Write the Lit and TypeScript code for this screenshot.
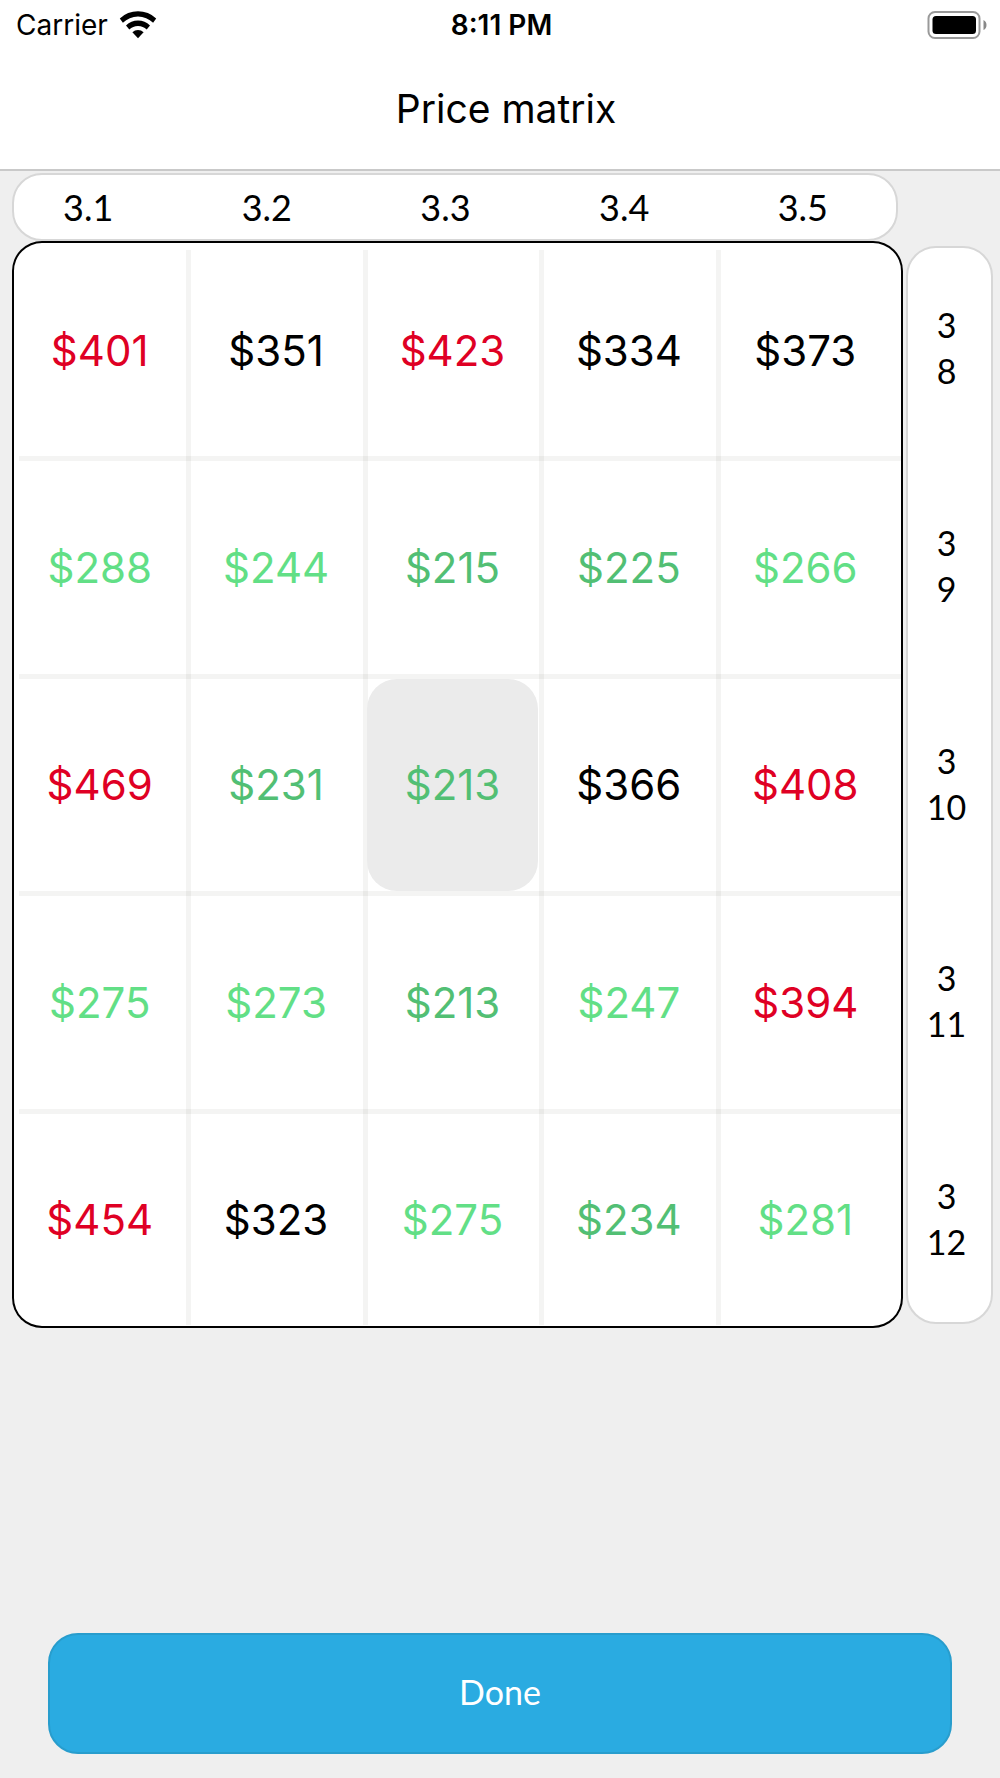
import { LitElement, html, css } from "lit";
import { customElement, state } from "lit/decorators.js";
import { classMap } from "lit/directives/class-map.js";

type Level = "low" | "fair" | "normal" | "high";

const DEPARTURES = ["3.1", "3.2", "3.3", "3.4", "3.5"];
const RETURNS = [["3", "8"], ["3", "9"], ["3", "10"], ["3", "11"], ["3", "12"]];
const PRICES = [
  [401, 351, 423, 334, 373],
  [288, 244, 215, 225, 266],
  [469, 231, 213, 366, 408],
  [275, 273, 213, 247, 394],
  [454, 323, 275, 234, 281],
];

function levelOf(price: number): Level {
  if (price < 240) return "low";
  if (price < 300) return "fair";
  if (price < 390) return "normal";
  return "high";
}

@customElement("status-bar")
export class StatusBar extends LitElement {
  static styles = css`
    :host {
      display: grid;
      grid-template-columns: 1fr auto 1fr;
      align-items: center;
      height: 50px;
      padding: 0 13px 0 16px;
      font-size: 28px;
      line-height: 32px;
    }
    .carrier {
      display: flex;
      align-items: center;
      gap: 11px;
    }
    .time {
      font-weight: 600;
    }
    .battery {
      justify-self: end;
    }
    svg {
      display: block;
    }
  `;

  render() {
    return html`
      <div class="carrier">
        <span>Carrier</span>
        <svg width="38" height="30" viewBox="0 0 38 30" role="img" aria-label="Wi-Fi">
          <path d="M.8 8.600a26 26 0 0 1 36.400 0l-3.100 4.200a21.500 21.500 0 0 0-30.200 0z" />
          <path d="M7 15.400a17.300 17.300 0 0 1 24 0l-3.300 4.200a12.300 12.300 0 0 0-17.400 0z" />
          <path d="M13.400 22.200a8.400 8.400 0 0 1 11.200 0L19 28.200z" />
        </svg>
      </div>
      <div class="time">8:11 PM</div>
      <svg class="battery" width="60" height="28" viewBox="0 0 60 28" role="img" aria-label="Battery full">
        <rect x="1.500" y="1" width="51" height="26" rx="6.500" fill="none" stroke="#999" stroke-width="2" />
        <rect x="5.500" y="5" width="43.500" height="18" rx="3.500" />
        <path d="M56.500 9q3 1.500 3 5t-3 5z" fill="#888" />
      </svg>
    `;
  }
}

@customElement("price-matrix")
export class PriceMatrix extends LitElement {
  @state() private row = 2;
  @state() private col = 2;

  static styles = css`
    :host {
      display: grid;
      grid-template-columns: 1fr 87px;
      column-gap: 3px;
      padding: 2px 7px 0 12px;
    }
    ol {
      list-style: none;
      margin: 0;
      box-sizing: border-box;
      display: flex;
      justify-content: space-between;
      background: #fff;
      border: 2px solid #d7d7d7;
      border-radius: 30px;
      font-family: Lato, "Open Sans", sans-serif;
      font-weight: 400;
      font-size: 36px;
    }
    .departures {
      align-items: center;
      height: 68px;
      margin-right: 5px;
      padding: 0 68px 0 49px;
    }
    .returns {
      grid-column: 2;
      flex-direction: column;
      margin: 5px 0 4px;
      padding: 54px 6px 57px 0;
      text-align: center;
      font-size: 34px;
      line-height: 46px;
    }
    .returns span {
      display: block;
    }
    .board {
      grid-column: 1;
      background: #fff;
      border-radius: 30px;
      box-shadow: inset 0 0 0 2px #000;
      padding-right: 9px;
    }
    table {
      width: 100%;
      height: 1087px;
      table-layout: fixed;
      border-collapse: separate;
      border-spacing: 0;
    }
    td {
      position: relative;
      height: 20%;
      padding: 3px 3px 2px 2px;
      box-sizing: border-box;
    }
    td::before,
    td::after {
      content: "";
      position: absolute;
      background: rgba(30, 30, 10, 0.05);
      pointer-events: none;
    }
    td::before {
      height: 5px;
      left: 0;
      right: 0;
      bottom: -3px;
    }
    td::after {
      width: 5px;
      top: 0;
      bottom: 0;
      right: -3px;
    }
    td:first-child::before {
      left: 7px;
    }
    td:last-child::before {
      right: -7px;
    }
    tr:first-child td::after {
      top: 9px;
    }
    tr:last-child td::after {
      bottom: 3px;
    }
    tr:last-child td::before,
    td:last-child::after {
      display: none;
    }
    button {
      display: block;
      width: 100%;
      height: 100%;
      margin: 0;
      padding: 0;
      border: 0;
      border-radius: 30px;
      background: transparent;
      font: inherit;
      font-size: 42px;
      cursor: pointer;
    }
    .selected {
      background: #ebebeb;
    }
    .low {
      color: #52bf74;
    }
    .fair {
      color: #62df86;
    }
    .normal {
      color: #000;
    }
    .high {
      color: #df0024;
    }
  `;

  private select(row: number, col: number) {
    this.row = row;
    this.col = col;
  }

  render() {
    return html`
      <ol class="departures">
        ${DEPARTURES.map((d) => html`<li>${d}</li>`)}
      </ol>
      <div class="board">
        <table aria-label="Prices">
          <tbody>
            ${PRICES.map(
              (line, r) => html`<tr>
                ${line.map((price, c) => {
                  const selected = r === this.row && c === this.col;
                  return html`<td>
                    <button
                      type="button"
                      class=${classMap({ [levelOf(price)]: true, selected })}
                      aria-pressed=${selected ? "true" : "false"}
                      @click=${() => this.select(r, c)}
                    >$${price}</button>
                  </td>`;
                })}
              </tr>`
            )}
          </tbody>
        </table>
      </div>
      <ol class="returns">
        ${RETURNS.map(([m, d]) => html`<li><span>${m}</span><span>${d}</span></li>`)}
      </ol>
    `;
  }
}

@customElement("app-root")
export class AppRoot extends LitElement {
  static styles = css`
    :host {
      display: flex;
      flex-direction: column;
      min-height: 100vh;
      background: #efefef;
      color: #000;
      font-family: Inter, Roboto, sans-serif;
    }
    header {
      background: #fff;
      border-bottom: 2px solid #c9c9c9;
    }
    h1 {
      margin: 0;
      padding: 35px 0 36px 12px;
      font-size: 39px;
      line-height: 48px;
      font-weight: 400;
      text-align: center;
    }
    footer {
      margin-top: auto;
      padding: 24px 48px;
    }
    .done {
      display: block;
      width: 100%;
      height: 121px;
      padding: 0 0 4px;
      border: 2px solid #289dcd;
      border-radius: 30px;
      background: #2aabe1;
      color: #fff;
      font-family: Lato, "Open Sans", sans-serif;
      font-size: 34px;
      cursor: pointer;
    }
  `;

  render() {
    return html`
      <header>
        <status-bar></status-bar>
        <h1>Price matrix</h1>
      </header>
      <main><price-matrix></price-matrix></main>
      <footer><button class="done" type="button">Done</button></footer>
    `;
  }
}
